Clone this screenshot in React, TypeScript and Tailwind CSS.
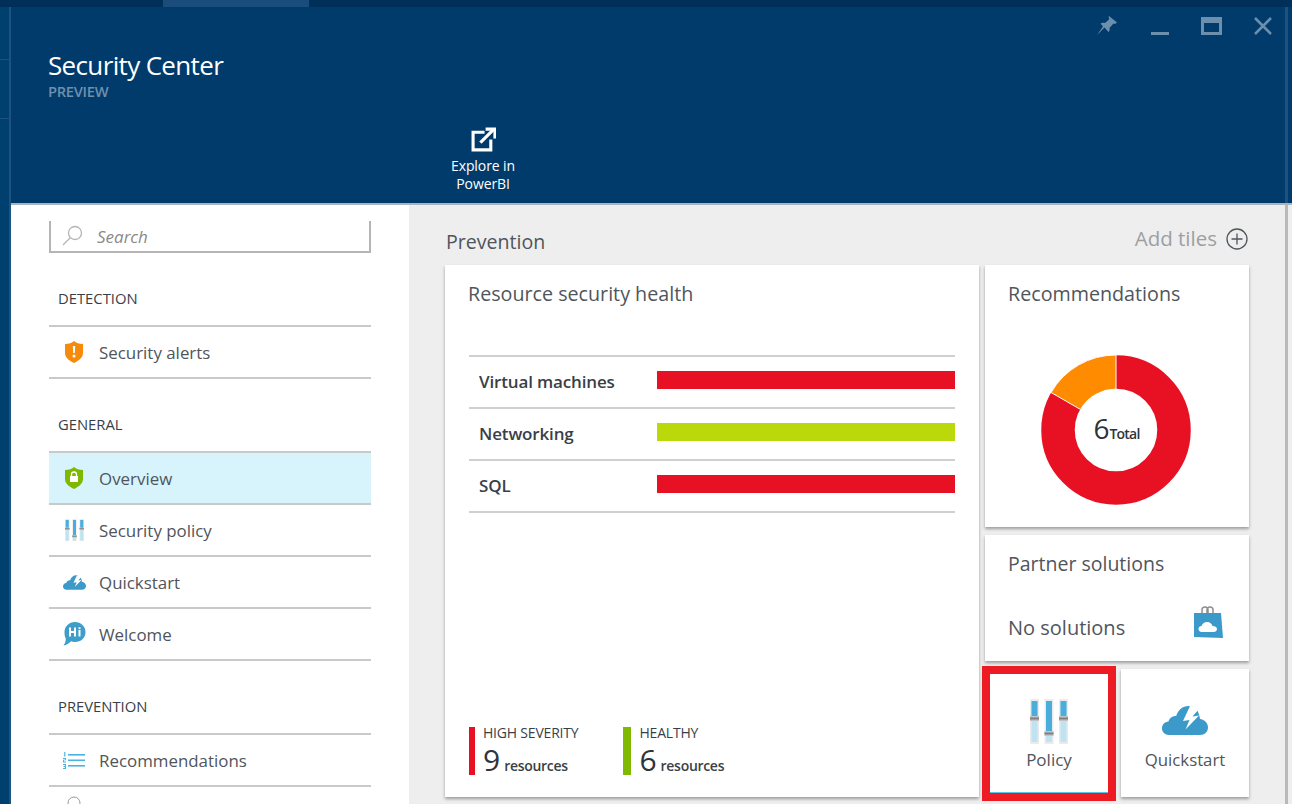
import React from "react";

const F = "font-['Open_Sans','Noto_Sans',sans-serif]";

function Sliders({ s = 1 }: { s?: number }) {
  return (
    <svg width={38 * s} height={45 * s} viewBox="0 0 38 45">
      {[0, 14.500, 29].map((x, i) => {
        const k = i === 1 ? 32 : 17;
        return (
          <g key={x}>
            <rect x={x} y={0} width={9} height={45} fill="#ebebeb" />
            <rect x={x + 1.500} y={2} width={6} height={41} fill="#bfe3f2" />
            <rect x={x + 1.500} y={2} width={6} height={k} fill="#4aaddb" />
            <rect x={x} y={k} width={9} height={5} fill="#c4c4c4" />
            <rect x={x} y={k + 1.500} width={9} height={2} fill="#808080" />
          </g>
        );
      })}
    </svg>
  );
}

function Cloud({ w = 46, h = 29 }: { w?: number; h?: number }) {
  return (
    <svg width={w} height={h} viewBox="0 0 46 29">
      <path
        d="M7 29C2.800 29 0 26 0 22.500C0 18.500 2.800 15.800 6.500 15.500C7.500 12 10.500 9.800 14.200 10C16 4 20.500 0 26.500 0C31.500 0 35.500 3 37 8.500C37.500 10 37.800 11.500 38 13C42.500 13.500 46 17 46 21.500C46 26 42.500 29 38 29Z"
        fill="#3b9ac9"
      />
      <path d="M28 0L21 15L27.500 14L23.500 23.500L37 9.500L30.500 10.500L37 3L33 0.500Z" fill="#fff" />
    </svg>
  );
}

function Shield({ color, children }: { color: string; children: React.ReactNode }) {
  return (
    <svg width="18" height="22" viewBox="0 0 18 22">
      <path d="M9 0C11 1.800 14 3 18 3V12C18 17 13 20 9 22C5 20 0 17 0 12V3C4 3 7 1.800 9 0Z" fill={color} />
      {children}
    </svg>
  );
}

function Row({ icon, label, active }: { icon: React.ReactNode; label: string; active?: boolean }) {
  return (
    <div className={`flex h-[52px] items-center border-b-2 border-[#c9c9c9] ${active ? "bg-[#d7f4fd]" : ""}`}>
      <div className="flex w-[50px] shrink-0 justify-center">{icon}</div>
      <span className="mt-[2px] text-[16.900px] text-[#50555c]">{label}</span>
    </div>
  );
}

function Group({ title, children }: { title: string; children: React.ReactNode }) {
  return (
    <div className="mt-[28px]">
      <div className="flex h-[46px] items-center border-b-2 border-[#c9c9c9] pb-[10px] pl-[9px] text-[14.800px] text-[#3a3f47]">
        {title}
      </div>
      {children}
    </div>
  );
}

function Bar({ label, color }: { label: string; color: string }) {
  return (
    <div className="flex h-[52px] items-center border-b-2 border-[#d0d0d0] pl-[10px]">
      <span className="w-[178px] text-[17px] font-semibold tracking-[-0.15px] text-[#3a3f47]">{label}</span>
      <div className="mb-[4px] h-[18px] flex-1" style={{ backgroundColor: color }} />
    </div>
  );
}

function Stat({ color, bar, title, n, pad }: { color: string; bar: string; title: string; n: string; pad: string }) {
  return (
    <div className="flex h-12 items-stretch">
      <div className={bar} style={{ backgroundColor: color }} />
      <div className={`-mt-[3px] ${pad}`}>
        <div className="text-[14px] leading-[18px] tracking-[-0.2px] text-[#3a3f47]">{title}</div>
        <div className="mt-[3px] flex h-[30px] items-baseline">
          <span className="text-[30px] leading-[30px] text-[#2f343b]">{n}</span>
          <span className="ml-[4px] text-[14px] leading-[18px] font-semibold tracking-[-0.3px] text-[#3a3f47]">
            resources
          </span>
        </div>
      </div>
    </div>
  );
}

const tile = "bg-white shadow-[0_2px_3px_rgba(0,0,0,0.35)]";
const tileTitle = "text-[19.700px] leading-[28px] text-[#50555c]";

export default function App() {
  return (
    <div className={`${F} flex h-[804px] w-[1292px] flex-col overflow-hidden bg-[#003b6b]`}>
      <div className="flex h-[7px] shrink-0 bg-[#002f59]">
        <div className="ml-[163px] w-[146px] bg-[#1a4d7c]" />
      </div>
      <div className="flex min-h-0 flex-1">
        <div className="flex w-[11px] shrink-0 flex-col border-r-2 border-[#1d5180] bg-[#00406f]">
          <div className="h-[53px] border-b border-[#1d5180]" />
          <div className="h-[59px] border-b border-[#1d5180]" />
        </div>
        <div className="flex min-w-0 flex-1 flex-col">
          <header className="relative h-[198px] shrink-0 border-b-2 border-[#aab4bd] bg-[#003b6b]">
            <div className="pl-[37px] pt-[40px]">
              <div className="text-[26px] leading-[36px] tracking-[-0.65px] text-white">Security Center</div>
              <div className="text-[14.700px] leading-[17px] font-semibold tracking-[-0.3px] text-[#6f90ad]">PREVIEW</div>
            </div>
            <div className="absolute left-[422px] top-[120px] flex w-[100px] flex-col items-center text-center text-[14px] leading-[18px] tracking-[-0.1px] text-white">
              <svg width="25" height="25" viewBox="0 0 24 24" fill="none" stroke="#fff" strokeWidth="3">
                <path d="M13 5H2V22H19V12" />
                <path d="M9 15L22 2" />
                <path d="M14 2H23V11" />
              </svg>
              <div className="mt-[5px] w-[80px]">Explore in PowerBI</div>
            </div>
            <div className="absolute right-[20px] top-[9px] flex items-center gap-[32px]">
              <svg className="mr-[2px]" width="20" height="20" viewBox="0 0 20 20" fill="#6d8fae">
                <path d="M12 0L20 6.500L18 8L16.500 7.500L12.500 12C13 14 12.500 15 11.500 16L7.500 11.500L0 19L6 10.500L3.500 7.500C5 6.500 6.500 6.500 8 7L12.500 3L11.500 1.500Z" />
              </svg>
              <div className="mt-[15px] h-[3px] w-[18px] bg-[#6d8fae]" />
              <div className="h-[18px] w-[21px] border-[3px] border-t-[6px] border-[#6d8fae]" />
              <svg width="18" height="18" viewBox="0 0 18 18" stroke="#6d8fae" strokeWidth="2.500">
                <path d="M1 1L17 17M17 1L1 17" />
              </svg>
            </div>
            <div className="absolute bottom-0 right-[4px] top-0 w-[3px] bg-[#1d5180]" />
          </header>
          <div className="flex min-h-0 flex-1">
            <aside className="w-[398px] shrink-0 overflow-hidden bg-white px-[38px]">
              <div className="mt-[16px] flex h-[32px] items-center border-x-2 border-b-2 border-[#b5b5b5] pl-[10px]">
                <svg width="22" height="22" viewBox="0 0 22 22" fill="none" stroke="#b5b5b5" strokeWidth="1.300">
                  <circle cx="14" cy="8" r="6.500" />
                  <path d="M9.500 12.500L2 20" />
                </svg>
                <span className="ml-[14px] mt-[2px] text-[17px] italic text-[#8a8a8a]">Search</span>
              </div>
              <Group title="DETECTION">
                <Row
                  label="Security alerts"
                  icon={
                    <Shield color="#f58a0b">
                      <path d="M7.800 5H10.200L9.800 12H8.200ZM9 13.500A1.500 1.500 0 1 1 9 16.500A1.500 1.500 0 1 1 9 13.500Z" fill="#fff" />
                    </Shield>
                  }
                />
              </Group>
              <Group title="GENERAL">
                <Row
                  active
                  label="Overview"
                  icon={
                    <Shield color="#7fb800">
                      <rect x="5" y="9" width="8" height="6" fill="#fff" />
                      <path d="M6.500 9V7.500A2.500 2.500 0 0 1 11.500 7.500V9" fill="none" stroke="#fff" strokeWidth="1.300" />
                    </Shield>
                  }
                />
                <Row label="Security policy" icon={<Sliders s={0.5} />} />
                <Row label="Quickstart" icon={<Cloud w={23} h={15} />} />
                <Row
                  label="Welcome"
                  icon={
                    <svg width="23" height="26" viewBox="0 0 23 26">
                      <path d="M12 1C18 1 22.500 5.500 22.500 11C22.500 17 18 21 12 21C10.500 21 9 20.700 8 20.200C6 22.500 3.500 24 0.500 24.500C2 22.500 2.800 20.500 2.800 17.500C1.800 16 1.500 13.500 1.500 11C1.500 5.500 6 1 12 1Z" fill="#3d9ecb" />
                      <rect x="6" y="6.500" width="2" height="9" fill="#fff" />
                      <rect x="11" y="6.500" width="2" height="9" fill="#fff" />
                      <rect x="8" y="10" width="3" height="2" fill="#fff" />
                      <rect x="15.500" y="9" width="2" height="6.500" fill="#fff" />
                      <rect x="15.500" y="6.300" width="2" height="1.800" fill="#fff" />
                    </svg>
                  }
                />
              </Group>
              <Group title="PREVENTION">
                <Row
                  label="Recommendations"
                  icon={
                    <svg width="22" height="17" viewBox="0 0 22 17" fill="#4bb3dd">
                      <rect x="5" y="2" width="17" height="1.600" />
                      <rect x="5" y="7.500" width="17" height="1.600" />
                      <rect x="5" y="13" width="17" height="1.600" />
                      <rect x="1.200" y="0" width="1.200" height="4.500" />
                      <path d="M0 6H3V8.200H1V9.500H3V10.500H0V7.800H2V7H0Z" />
                      <path d="M0 12H3V17H0V16H2V15H0.500V14H2V13H0Z" />
                    </svg>
                  }
                />
                <div className="flex h-[20px] pl-[16px] pt-[8px]">
                  <svg width="18" height="12" viewBox="0 0 18 12" fill="none" stroke="#9a9a9a" strokeWidth="1">
                    <circle cx="9" cy="8" r="6" />
                  </svg>
                </div>
              </Group>
            </aside>
            <div className="flex min-w-0 flex-1 bg-[#eeeeee] pr-[4px]">
              <main className="flex min-w-0 flex-1 flex-col border-r-[3px] border-r-[#b9b9b9] pl-[36px] pr-[36px]">
                <div className="flex h-[60px] shrink-0 items-start justify-between pt-[24px]">
                  <span className="pl-px text-[19.600px] leading-[26px] text-[#50555c]">Prevention</span>
                  <div className="-mt-[2px] mr-[1px] flex items-center gap-[9px]">
                    <span className="-mt-[2px] text-[20.500px] leading-[26px] text-[#9b9fa3]">Add tiles</span>
                    <svg width="22" height="22" viewBox="0 0 22 22" fill="none" stroke="#50555c" strokeWidth="1.300">
                      <circle cx="11" cy="11" r="10" />
                      <path d="M11 5.500V16.500M5.500 11H16.500" />
                    </svg>
                  </div>
                </div>
                <div className="flex min-h-0 flex-1 items-start gap-[6px]">
                  <section className={`${tile} flex h-[532px] w-[534px] shrink-0 flex-col px-[24px]`}>
                    <div className={`${tileTitle} -ml-px pt-[15px]`}>Resource security health</div>
                    <div className="mt-[47px] border-t-2 border-[#d0d0d0]">
                      <Bar label="Virtual machines" color="#e81123" />
                      <Bar label="Networking" color="#bad80a" />
                      <Bar label="SQL" color="#e81123" />
                    </div>
                    <div className="mb-[22px] mt-auto flex gap-[45px]">
                      <Stat color="#e81123" bar="w-[6px]" pad="pl-2" title="HIGH SEVERITY" n="9" />
                      <Stat color="#7fba00" bar="w-[8px]" pad="pl-[8px]" title="HEALTHY" n="6" />
                    </div>
                  </section>
                  <div className="flex w-[264px] shrink-0 flex-col gap-[8px]">
                    <section className={`${tile} h-[262px] px-[23px] pt-[15px]`}>
                      <div className={tileTitle}>Recommendations</div>
                      <div className="relative ml-[33px] mt-[47px] h-[150px] w-[150px]">
                        <svg width="150" height="150" viewBox="0 0 150 150">
                          <circle cx="75" cy="75" r="58" fill="none" stroke="#e81123" strokeWidth="33.500" />
                          <path d="M75 0A75 75 0 0 0 10.050 37.500L39.500 54.500A41 41 0 0 1 75 34Z" fill="#ff8c00" stroke="#fff" strokeWidth="1" />
                        </svg>
                        <div className="absolute inset-0 flex items-baseline justify-center pl-[1px] pt-[57px] text-[#2f343b]">
                          <span className="text-[28px] leading-[32px]">6</span>
                          <span className="text-[14px] font-semibold tracking-[-0.8px]">Total</span>
                        </div>
                      </div>
                    </section>
                    <section className={`${tile} h-[126px] px-[23px] pt-[15px]`}>
                      <div className="text-[19.500px] leading-[28px] text-[#50555c]">Partner solutions</div>
                      <div className="mt-[36px] flex items-center justify-between pr-[3px]">
                        <span className="text-[20px] leading-[28px] text-[#50555c]">No solutions</span>
                        <svg className="-mt-[12px]" width="30" height="34" viewBox="0 0 30 34">
                          <path d="M9 10V5C9 1 15 1 15 5V10M14 10V5C14 1 20 1 20 5V10" fill="none" stroke="#8f8f8f" strokeWidth="1.500" />
                          <path d="M1 8H28L30 33L1 32Z" fill="#3b9ac9" />
                          <path d="M9 27C6.500 27 5.500 25.500 5.500 24C5.500 22 7 21 8.500 21C9.500 18.500 11.500 17 14 17C17 17 19 19 19.500 21C22 21 24 22.300 24 24C24 26 22.500 27 20.500 27Z" fill="#fff" />
                        </svg>
                      </div>
                    </section>
                    <div className="flex h-[128px] gap-[8px]">
                      <div className="relative w-[128px]">
                        <div className={`${tile} flex h-full flex-col items-center pt-[30px]`}>
                          <Sliders />
                          <span className="mt-[4px] text-[17px] leading-[24px] text-[#50555c]">Policy</span>
                        </div>
                        <div className="pointer-events-none absolute -bottom-[4px] -left-[3px] -right-[3px] -top-[3px] border-[8px] border-[#ed1c24]">
                          <div className="absolute bottom-0 left-0 right-0 h-px bg-[#5bc4e5]" />
                        </div>
                      </div>
                      <div className={`${tile} flex w-[128px] flex-col items-center pt-[37px]`}>
                        <Cloud />
                        <span className="mt-[13px] text-[16.800px] leading-[24px] text-[#50555c]">Quickstart</span>
                      </div>
                    </div>
                  </div>
                </div>
              </main>
            </div>
          </div>
        </div>
      </div>
    </div>
  );
}
